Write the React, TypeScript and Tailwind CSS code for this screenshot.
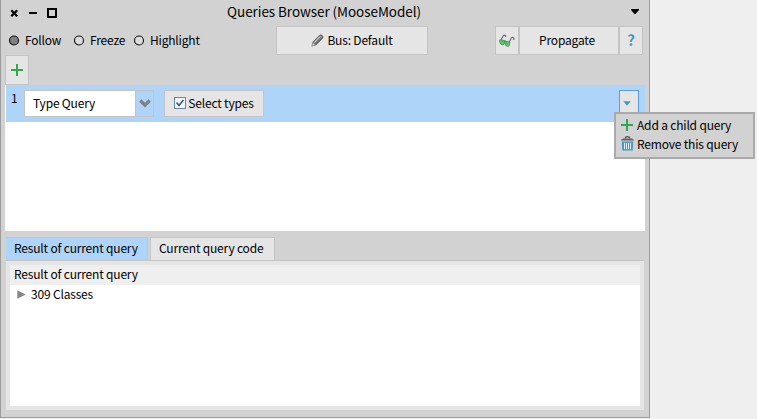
import type { ReactNode } from 'react';

function Radio({ label, on, className }: { label: string; on?: boolean; className: string }) {
  return (
    <div className={`flex items-center ${className}`}>
      <svg width="11" height="11" viewBox="0 0 11 11" className="mr-[5px] shrink-0">
        <circle cx="5" cy="5.5" r="4.5" fill={on ? '#808080' : '#dcdcdc'} stroke="#111" strokeWidth="1.1" />
      </svg>
      <span>{label}</span>
    </div>
  );
}

function Box({ className, children }: { className: string; children?: ReactNode }) {
  return (
    <div className={`flex shrink-0 items-center justify-center border border-[#c4c4c4] bg-[#e5e5e5] ${className}`}>
      {children}
    </div>
  );
}

function Plus() {
  return (
    <svg width="13" height="13" viewBox="0 0 13 13" shapeRendering="crispEdges" className="shrink-0">
      <path d="M0 6H12V8H0zM5 1H7V13H5z" fill="#30a84e" />
    </svg>
  );
}

function Pencil() {
  return (
    <svg width="13" height="13" viewBox="0 0 13 13" className="shrink-0">
      <path d="M1.8 8.2L8.6 1.2Q9.8 0.3 11.2 1.6Q12.6 3 11.7 4.1L4.8 11.1z" fill="#888" stroke="#444" strokeWidth="0.7" />
      <path d="M3 8.8L9.4 2.2" stroke="#ddd" strokeWidth="0.9" />
      <path d="M4.6 10.2L11 3.7" stroke="#444" strokeWidth="0.8" />
      <path d="M1.9 8.4L4.6 11L0.8 12.2z" fill="#ddd" stroke="#555" strokeWidth="0.6" />
    </svg>
  );
}

function Glasses() {
  return (
    <svg width="16" height="13" viewBox="0 0 16 13" className="shrink-0">
      <path d="M1.5 6.5L4.2 2Q5.4 0.3 6.6 1.8V3M10 8.5L12.3 4Q13.6 2.4 14.8 4V6" fill="none" stroke="#666" strokeWidth="1.1" />
      <path d="M4 7Q6 6.5 8 8" stroke="#3d8e50" strokeWidth="1.2" />
      <path d="M0.5 6Q3 5 5.6 7Q6 11 3.2 11Q0.4 10.5 0.5 6z" fill="#62bd6c" stroke="#39934b" strokeWidth="0.7" />
      <path d="M5.8 7.6Q8.5 6.8 10.9 8.3Q11 12.5 8.3 12.5Q5.6 12 5.8 7.6z" fill="#62bd6c" stroke="#39934b" strokeWidth="0.7" />
    </svg>
  );
}

function Trash() {
  return (
    <svg width="13" height="15" viewBox="0 0 13 15" className="shrink-0">
      <path d="M4 2.6Q4.3 0.6 6.5 0.6T9 2.6" fill="none" stroke="#555" strokeWidth="1.1" />
      <path d="M0 4.6Q0.3 2.5 2.5 2.5H10.5Q12.7 2.5 13 4.6z" fill="#666" />
      <path d="M0.8 5.6H12.2L11.8 13.7Q11.7 14.6 11 14.6H2Q1.3 14.6 1.2 13.7z" fill="#4697c4" />
      <path d="M3.5 6.8V13.2M5.5 6.8V13.2M7.5 6.8V13.2M9.5 6.8V13.2" stroke="#e0eff7" strokeWidth="1" />
    </svg>
  );
}

export default function App() {
  return (
    <div className="relative h-[419px] w-[757px] overflow-hidden whitespace-nowrap bg-[#efefef] font-['Noto_Sans_CJK_SC','Noto_Sans',sans-serif] text-[12px] leading-[18px] tracking-[-0.18px] text-black">
      <div className="flex h-[418px] w-[650px] flex-col border border-t-0 border-[#9c9c9c] bg-[#d2d2d2]">
        <header className="flex h-[25px] shrink-0 items-center pl-[9px] pr-[10px]">
          <svg width="48" height="10" viewBox="0 0 48 10" className="shrink-0">
            <path d="M1.3 2.3L7.2 8.2M7.2 2.3L1.3 8.2" stroke="#000" strokeWidth="2.3" />
            <path d="M19 4H27V6H19z" fill="#000" />
            <path d="M38 1H46V9H38z" fill="none" stroke="#000" strokeWidth="2" />
          </svg>
          <h1 className="-mt-[3px] flex-1 pr-[41px] text-center text-[13.5px] leading-[20px] tracking-[-0.06px]">Queries Browser (MooseModel)</h1>
          <svg width="8" height="5" viewBox="0 0 8 5" className="-mt-[2px]"><path d="M0 0H8V1L4.5 5H3.5L0 1z" /></svg>
        </header>

        <div className="mt-px flex h-[29px] shrink-0 items-center pl-[8px]">
          <Radio label="Follow" on className="w-[65px] pb-px" />
          <Radio label="Freeze" className="w-[60px] pb-px" />
          <Radio label="Highlight" className="w-[142px] pb-px" />
          <Box className="h-[29px] w-[152px] gap-[3px] pb-px"><Pencil /><span>Bus: Default</span></Box>
          <Box className="ml-[67px] h-[29px] w-[24px]"><Glasses /></Box>
          <Box className="h-[29px] w-[100px] pb-px pr-[4px]">Propagate</Box>
          <Box className="h-[29px] w-[24px] pb-px text-[15px] font-bold text-[#4796c5]">?</Box>
        </div>

        <div className="flex h-[30px] shrink-0 pl-[4px]">
          <Box className="h-[30px] w-[24px] pb-[2px]"><Plus /></Box>
        </div>

        <section className="ml-[4px] h-[146px] w-[640px] shrink-0 bg-white pl-px">
          <div className="flex h-[37px] bg-[#aed4fa] pt-[5px]">
            <span className="-mt-px w-[18px] shrink-0 pl-[5px]">1</span>
            <div className="flex h-[27px] w-[130px] border border-[#c4c4c4] bg-white">
              <span className="flex flex-1 items-center pb-px pl-[8px]">Type Query</span>
              <span className="flex w-[18px] items-center justify-center border-l border-[#c4c4c4] bg-[#aed4fa]">
                <svg width="12" height="9" viewBox="0 0 12 9"><path d="M1.3 1.5L6 6.2L10.7 1.5" fill="none" stroke="#808080" strokeWidth="3.2" /></svg>
              </span>
            </div>
            <Box className="ml-[10px] h-[27px] w-[100px] gap-[2px] pb-px">
              <svg width="12" height="12" viewBox="0 0 12 12">
                <rect x="0.5" y="0.5" width="11" height="11" fill="#f4f8fb" stroke="#6986a6" />
                <path d="M2.6 5.5L5 8.5L9.4 3" fill="none" stroke="#36577f" strokeWidth="1.6" />
              </svg>
              <span>Select types</span>
            </Box>
            <div className="ml-[355px] flex h-[27px] w-[20px] items-center border border-[#5a9fe0] bg-[#e5e5e5] pb-px pl-[3px]">
              <svg width="8" height="5" viewBox="0 0 8 5"><path d="M0.3 0.3H7.7L4 4.7z" fill="#4796c5" /></svg>
            </div>
          </div>
        </section>

        <nav className="ml-[5px] mt-[6px] flex h-[23px] shrink-0">
          <div className="flex w-[142px] items-center border-r border-t border-[#c4c4c4] bg-[#aed4fa] pb-[2px] pl-[8px]">Result of current query</div>
          <div className="ml-[2px] flex w-[125px] items-center border border-b-0 border-[#c4c4c4] bg-[#e5e5e5] pb-[2px] pl-[8px]">Current query code</div>
        </nav>
        <section className="ml-[5px] h-[150px] w-[638px] shrink-0 border-t border-[#c4c4c4] bg-[#e5e5e5] px-[4px] pb-[4px] pt-[4px]">
          <div className="h-[20px] bg-[#efefef] pl-[4px] leading-[18px]">Result of current query</div>
          <div className="flex h-[121px] items-start bg-white pl-[7px]">
            <svg width="9" height="9" viewBox="0 0 9 9" className="mt-[5px]"><path d="M0.3 0.3L8.8 4.5L0.3 8.7z" fill="#878787" /></svg>
            <span className="pl-[5px] leading-[18px]">309 Classes</span>
          </div>
        </section>
      </div>

      <div className="absolute left-[614px] top-[112px] h-[47px] w-[141px] border-2 border-[#aaa] bg-[#d2d2d2] pl-[5px] pt-px">
        <div className="flex h-[19px] items-center gap-[3px]"><Plus /><span>Add a child query</span></div>
        <div className="flex h-[19px] items-center gap-[3px]"><Trash /><span>Remove this query</span></div>
      </div>
    </div>
  );
}
